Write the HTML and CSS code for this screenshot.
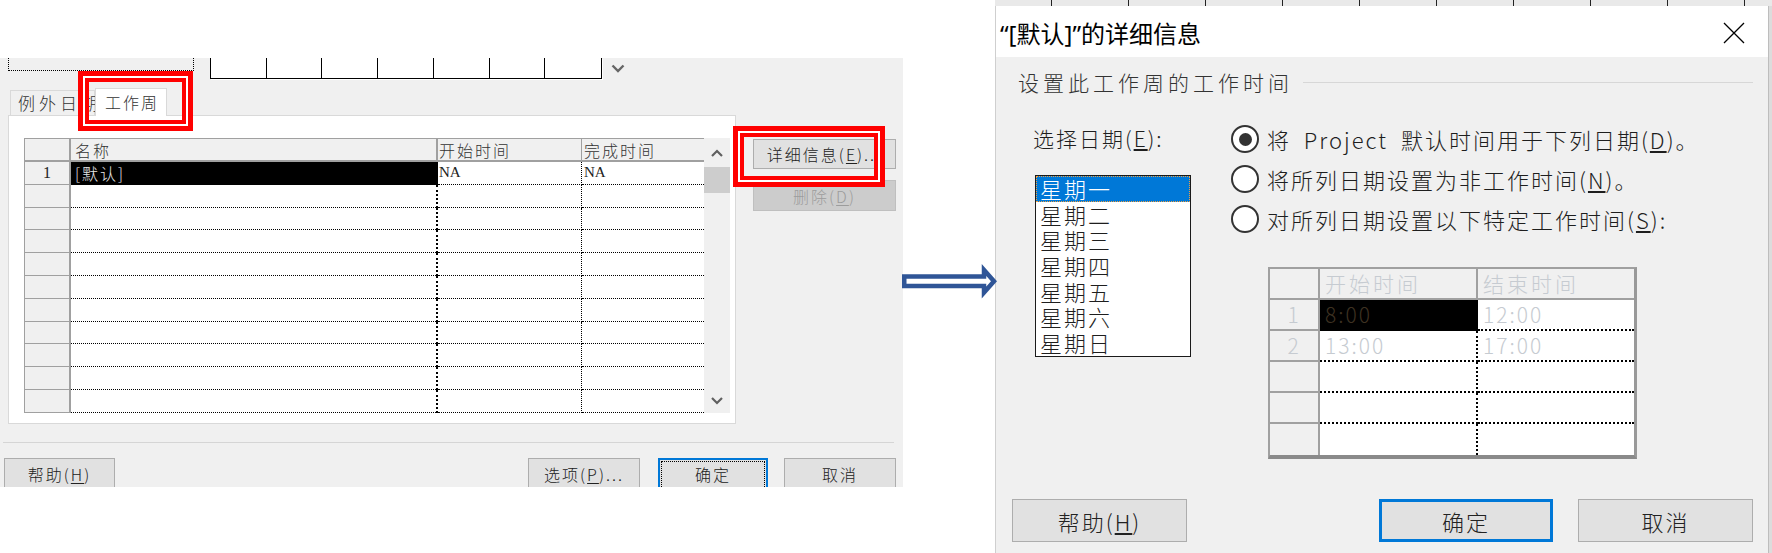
FILE: index.html
```html
<!DOCTYPE html>
<html lang="zh-CN">
<head>
<meta charset="utf-8">
<title>工作周详细信息</title>
<link rel="stylesheet" href="styles.css">
</head>
<body>
<div class="page">
  <section class="left">
    <div class="shot">
      <div class="strip">
        <div class="dotbox"></div>
        <div class="ruler"><span></span><span></span><span></span><span></span><span></span><span></span><span></span></div>
        <svg class="chev" viewBox="0 0 14 9"><polyline points="1.5,1.5 7,7 12.5,1.5" fill="none" stroke="#666" stroke-width="2.4"/></svg>
      </div>
      <div class="tabs">
        <div class="tab">例外日期</div>
        <div class="tab active">工作周</div>
      </div>
      <div class="main">
        <div class="panel">
          <div class="table">
            <div class="grid">
              <div class="row head"><div class="rh"></div><div class="c c1">名称</div><div class="c c2">开始时间</div><div class="c c3">完成时间</div></div>
              <div class="row"><div class="rh">1</div><div class="c c1 sel">[默认]</div><div class="c c2 lat">NA</div><div class="c c3 lat">NA</div></div>
              <div class="row"><div class="rh"></div><div class="c c1"></div><div class="c c2"></div><div class="c c3"></div></div>
              <div class="row"><div class="rh"></div><div class="c c1"></div><div class="c c2"></div><div class="c c3"></div></div>
              <div class="row"><div class="rh"></div><div class="c c1"></div><div class="c c2"></div><div class="c c3"></div></div>
              <div class="row"><div class="rh"></div><div class="c c1"></div><div class="c c2"></div><div class="c c3"></div></div>
              <div class="row"><div class="rh"></div><div class="c c1"></div><div class="c c2"></div><div class="c c3"></div></div>
              <div class="row"><div class="rh"></div><div class="c c1"></div><div class="c c2"></div><div class="c c3"></div></div>
              <div class="row"><div class="rh"></div><div class="c c1"></div><div class="c c2"></div><div class="c c3"></div></div>
              <div class="row"><div class="rh"></div><div class="c c1"></div><div class="c c2"></div><div class="c c3"></div></div>
              <div class="row"><div class="rh"></div><div class="c c1"></div><div class="c c2"></div><div class="c c3"></div></div>
              <div class="row"><div class="rh"></div><div class="c c1"></div><div class="c c2"></div><div class="c c3"></div></div>
            </div>
            <div class="vscroll">
              <div class="sbb up"><svg viewBox="0 0 12 8"><polyline points="1,7 6,2 11,7" fill="none" stroke="#606060" stroke-width="2.2"/></svg></div>
              <div class="thumb"></div>
              <div class="track"></div>
              <div class="sbb down"><svg viewBox="0 0 12 8"><polyline points="1,1 6,6 11,1" fill="none" stroke="#606060" stroke-width="2.2"/></svg></div>
            </div>
          </div>
        </div>
        <div class="side">
          <div class="btn b-detail">详细信息(<u>E</u>)...</div>
          <div class="btn b-del">删除(<u>D</u>)</div>
        </div>
      </div>
      <div class="sep"></div>
      <div class="btnrow">
        <div class="btn b-help">帮助(<u>H</u>)</div>
        <div class="btn b-opt">选项(<u>P</u>)...</div>
        <div class="btn b-ok">确定</div>
        <div class="btn b-cancel">取消</div>
      </div>
      <div class="hl hl-tab"></div>
      <div class="hl hl-btn"></div>
    </div>
  </section>

  <div class="arrow-col">
    <svg class="arrow" viewBox="0 0 96 30"><polygon points="2.25,9.5 82,9.5 82,3 92,14.3 82,25.6 82,19 2.25,19" fill="#fff" stroke="#2f5597" stroke-width="4.5" stroke-linejoin="miter"/></svg>
  </div>

  <section class="right">
    <div class="bgstrip"></div>
    <div class="win">
      <div class="dialog">
        <div class="titlebar">
          <div class="title">“[默认]”的详细信息</div>
          <svg class="close" viewBox="0 0 22 22"><path d="M1 1L21 21M21 1L1 21" stroke="#000" stroke-width="1.3" fill="none"/></svg>
        </div>
        <div class="dbody">
          <div class="group"><span>设置此工作周的工作时间</span><i></i></div>
          <div class="content">
            <div class="lcol">
              <div class="label">选择日期(<u>E</u>):</div>
              <div class="listbox">
                <div class="on">星期一</div>
                <div>星期二</div>
                <div>星期三</div>
                <div>星期四</div>
                <div>星期五</div>
                <div>星期六</div>
                <div>星期日</div>
              </div>
            </div>
            <div class="rcol">
              <div class="radios">
                <div class="radio"><span class="dot on"></span><span class="rt">将 Project 默认时间用于下列日期(<u>D</u>)。</span></div>
                <div class="radio"><span class="dot"></span><span class="rt">将所列日期设置为非工作时间(<u>N</u>)。</span></div>
                <div class="radio"><span class="dot"></span><span class="rt">对所列日期设置以下特定工作时间(<u>S</u>):</span></div>
              </div>
              <div class="ttable">
                <div class="trow thead"><div class="trh"></div><div class="tc t1">开始时间</div><div class="tc t2">结束时间</div></div>
                <div class="trow"><div class="trh">1</div><div class="tc t1 tsel">8:00</div><div class="tc t2">12:00</div></div>
                <div class="trow"><div class="trh">2</div><div class="tc t1">13:00</div><div class="tc t2">17:00</div></div>
                <div class="trow"><div class="trh"></div><div class="tc t1"></div><div class="tc t2"></div></div>
                <div class="trow"><div class="trh"></div><div class="tc t1"></div><div class="tc t2"></div></div>
                <div class="trow last"><div class="trh"></div><div class="tc t1"></div><div class="tc t2"></div></div>
              </div>
            </div>
          </div>
          <div class="dbtns">
            <div class="dbtn d-help">帮助(<u>H</u>)</div>
            <div class="dbtn d-ok">确定</div>
            <div class="dbtn d-cancel">取消</div>
          </div>
        </div>
      </div>
      <div class="edge"></div>
    </div>
  </section>
</div>
</body>
</html>
```

FILE: styles.css
```css
* { box-sizing: border-box; margin: 0; padding: 0; }
html, body { width: 1772px; height: 553px; overflow: hidden; background: #fff; }
body { font-family: "Noto Sans CJK SC", "Noto Sans", sans-serif; color: #222; }
u { text-decoration: underline; text-underline-offset: 2px; }

.page { display: flex; width: 1772px; height: 553px; }

/* ---------- left screenshot ---------- */
.left { width: 903px; flex: none; padding-top: 58px; }
.shot {
  position: relative; height: 429px; background: #f0f0f0; overflow: hidden;
  display: flex; flex-direction: column; font-size: 16px; letter-spacing: 2px; line-height: 1; font-weight: 300;
}
.strip { display: flex; height: 21px; flex: none; }
.dotbox { margin-left: 8px; width: 186px; height: 13px; border: 1px dotted #000; border-top: none; }
.ruler {
  margin-left: 16px; width: 392px; height: 21px; background: #fff;
  border: 1px solid #000; border-top: none; box-shadow: 1px 1px 0 #fff;
  display: grid; grid-template-columns: repeat(7, 1fr);
}
.ruler span { border-right: 1px solid #000; }
.ruler span:last-child { border-right: none; }
.chev { margin: 6px 0 0 9px; width: 14px; height: 9px; }

.tabs { display: flex; align-items: flex-end; height: 27px; margin-top: 9px; padding-left: 10px; flex: none; position: relative; z-index: 1; }
.tab {
  height: 25px; width: 85px; border: 1px solid #d9d9d9; border-bottom: none;
  padding-left: 7px; line-height: 24px; white-space: nowrap; color: #333; font-size: 17px; letter-spacing: 4px;
}
.tab.active {
  height: 28px; width: 72px; margin-bottom: -1px; background: #fff; padding-left: 9px; line-height: 27px;
  font-size: 16px; letter-spacing: 2px; position: relative;
}

.main { display: flex; height: 309px; flex: none; }
.panel { margin-left: 8px; width: 728px; height: 309px; background: #fff; border: 1px solid #d9d9d9; padding: 22px 0 0 15px; }
.table { display: flex; width: 706px; height: 275px; }
.grid { width: 680px; display: flex; flex-direction: column; }
.row { display: flex; height: 22.8px; flex: none; }
.row.head { height: 24px; }
.rh {
  width: 47px; flex: none; background: #f0f0f0; border-left: 1px solid #a0a0a0; border-right: 2px solid #a0a0a0;
  border-bottom: 1px solid #a0a0a0; display: flex; align-items: center; justify-content: center;
  font-family: "Liberation Serif", serif; color: #222; letter-spacing: 0; font-weight: 400;
}
.c { border-bottom: 1px dotted #000; display: flex; align-items: center; padding-left: 4px; white-space: nowrap; }
.c1 { width: 367px; border-right: 2px dotted #000; }
.c2 { width: 144px; border-right: 1px dotted #000; padding-left: 1px; }
.c3 { width: 122px; padding-left: 2px; }
.head .rh { border-top: 1px solid #a0a0a0; border-bottom: 2px solid #a0a0a0; }
.head .c { background: #f0f0f0; border-top: 1px solid #a0a0a0; border-bottom: 2px solid #a0a0a0; color: #333; }
.head .c1 { border-right: 2px solid #a0a0a0; }
.head .c2 { border-right: 1px solid #a0a0a0; }
.c.sel { background: #000; color: #e8e8e8; }
.lat { font-family: "Liberation Serif", serif; letter-spacing: 0; font-size: 15px; font-weight: 400; }

.vscroll { width: 26px; background: #f0f0f0; display: flex; flex-direction: column; }
.sbb { display: flex; align-items: center; justify-content: center; flex: none; }
.sbb svg { width: 12px; height: 8px; }
.sbb.up { height: 29px; }
.sbb.down { height: 24px; }
.thumb { height: 26px; background: #cdcdcd; flex: none; }
.track { flex: 1; }

.side { margin-left: 17px; width: 143px; padding-top: 24px; display: flex; flex-direction: column; gap: 11px; }
.btn {
  background: #e1e1e1; border: 1px solid #adadad; color: #222; display: flex; align-items: center;
  justify-content: center; white-space: nowrap; flex: none;
}
.b-detail { height: 30px; }
.b-del { height: 31px; background: #cccccc; border-color: #bfbfbf; color: #9c9c9c; }

.sep { margin: 18px 9px 0 3px; height: 1px; background: #d5d5d5; flex: none; }
.btnrow { display: flex; margin-top: 15px; padding: 0 7px 0 4px; height: 34px; flex: none; }
.btnrow .btn { height: 34px; padding-bottom: 3px; }
.b-help { width: 111px; }
.b-opt { width: 112px; margin-left: auto; }
.b-ok { width: 110px; margin-left: 18px; border: 2px solid #0078d7; outline: 1px dotted #000; outline-offset: -4px; }
.b-cancel { width: 112px; margin-left: 16px; }

.hl {
  position: absolute; border: 5px solid #f00; z-index: 5;
  box-shadow: inset 0 0 0 2px #fff, inset 0 0 0 6px #f00;
}
.hl-tab { left: 78px; top: 13px; width: 115px; height: 60px; }
.hl-btn { left: 733px; top: 68px; width: 152px; height: 61px; }

/* ---------- arrow ---------- */
.arrow-col { width: 92px; flex: none; padding-top: 267px; position: relative; z-index: 2; }
.arrow { display: block; width: 96px; height: 30px; margin-left: -1px; overflow: visible; }

/* ---------- right dialog ---------- */
.right { width: 777px; flex: none; display: flex; flex-direction: column; }
.bgstrip {
  height: 6px; flex: none; background-color: #e9e9e9;
  background-image: repeating-linear-gradient(90deg, transparent 0 76px, #222 76px 77px);
  background-position: -20px 0;
}
.win { display: flex; flex: 1; }
.dialog { width: 773px; border-left: 1px solid #cfcfcf; display: flex; flex-direction: column; background: #f0f0f0; }
.edge { width: 4px; background: #dcdcdc; border-left: 1px solid #bdbdbd; }
.titlebar { height: 51px; flex: none; background: #fff; display: flex; align-items: center; justify-content: space-between; padding: 2px 23px 0 4px; }
.title { font-family: "Noto Sans", "Noto Sans CJK SC", sans-serif; font-size: 24px; color: #000; white-space: nowrap; }
.close { width: 22px; height: 22px; }

.dbody { flex: 1; display: flex; flex-direction: column; font-size: 22px; color: #1e1e1e; letter-spacing: 2px; line-height: 1; font-weight: 300; }
.group { display: flex; align-items: center; height: 24px; margin: 13px 15px 0 22px; flex: none; }
.group span { font-size: 21px; letter-spacing: 4px; color: #333; white-space: nowrap; }
.group i { flex: 1; height: 1px; background: #d7d7d7; margin-left: 10px; }

.content { display: flex; margin-top: 31px; padding-left: 37px; flex: none; }
.lcol { width: 158px; flex: none; }
.label { height: 26px; line-height: 26px; font-size: 21px; letter-spacing: 2px; white-space: nowrap; }
.listbox { margin: 24px 0 0 2px; width: 156px; height: 182px; border: 1px solid #1a1a1a; background: #fff; font-size: 22px; letter-spacing: 2px; }
.listbox div { height: 25.7px; line-height: 25.7px; padding-left: 4px; white-space: nowrap; }
.listbox .on { background: #0078d7; color: #fff; outline: 1px dotted #f0a040; outline-offset: -1px; }

.rcol { margin-left: 40px; flex: 1; }
.radios { display: flex; flex-direction: column; gap: 12px; }
.radio { display: flex; align-items: center; height: 28px; white-space: nowrap; }
.dot {
  width: 28px; height: 28px; border: 2px solid #333; border-radius: 50%; background: #fff; flex: none;
  margin-right: 8px; display: flex; align-items: center; justify-content: center;
}
.dot.on::after { content: ""; width: 13px; height: 13px; border-radius: 50%; background: #333; }
.rt { word-spacing: 6px; }

.ttable {
  margin: 34px 0 0 37px; width: 369px; height: 192px; background: #fff;
  border-top: 2px solid #a0a0a0; border-left: 2px solid #a0a0a0; border-right: 3px solid #999; border-bottom: 4px solid #8a8a8a;
  display: flex; flex-direction: column; font-size: 21px; color: #c6cbd1;
}
.trow { display: flex; height: 31px; flex: none; }
.trh {
  width: 50px; flex: none; background: #f0f0f0; border-right: 2px solid #a0a0a0; border-bottom: 2px solid #a0a0a0;
  display: flex; align-items: center; justify-content: center;
}
.tc { display: flex; align-items: center; padding-left: 5px; border-bottom: 2px dotted #000; white-space: nowrap; }
.t1 { width: 158px; border-right: 2px dotted #000; }
.t2 { flex: 1; }
.thead .tc { background: #f0f0f0; border-bottom: 2px solid #a0a0a0; letter-spacing: 3px; }
.thead .t1 { border-right: 2px solid #a0a0a0; }
.trow.last .tc { border-bottom: none; }
.trow.last .trh { border-bottom: none; }
.tc.tsel { background: #000; color: #3e3222; }

.dbtns { display: flex; margin-top: 40px; padding: 0 15px 0 16px; flex: none; }
.dbtn {
  height: 43px; width: 175px; background: #e1e1e1; border: 1px solid #adadad; display: flex;
  align-items: center; justify-content: center; white-space: nowrap; color: #222;
}
.d-ok { width: 174px; margin-left: auto; border: 3px solid #0078d7; }
.d-cancel { margin-left: 25px; }
```
